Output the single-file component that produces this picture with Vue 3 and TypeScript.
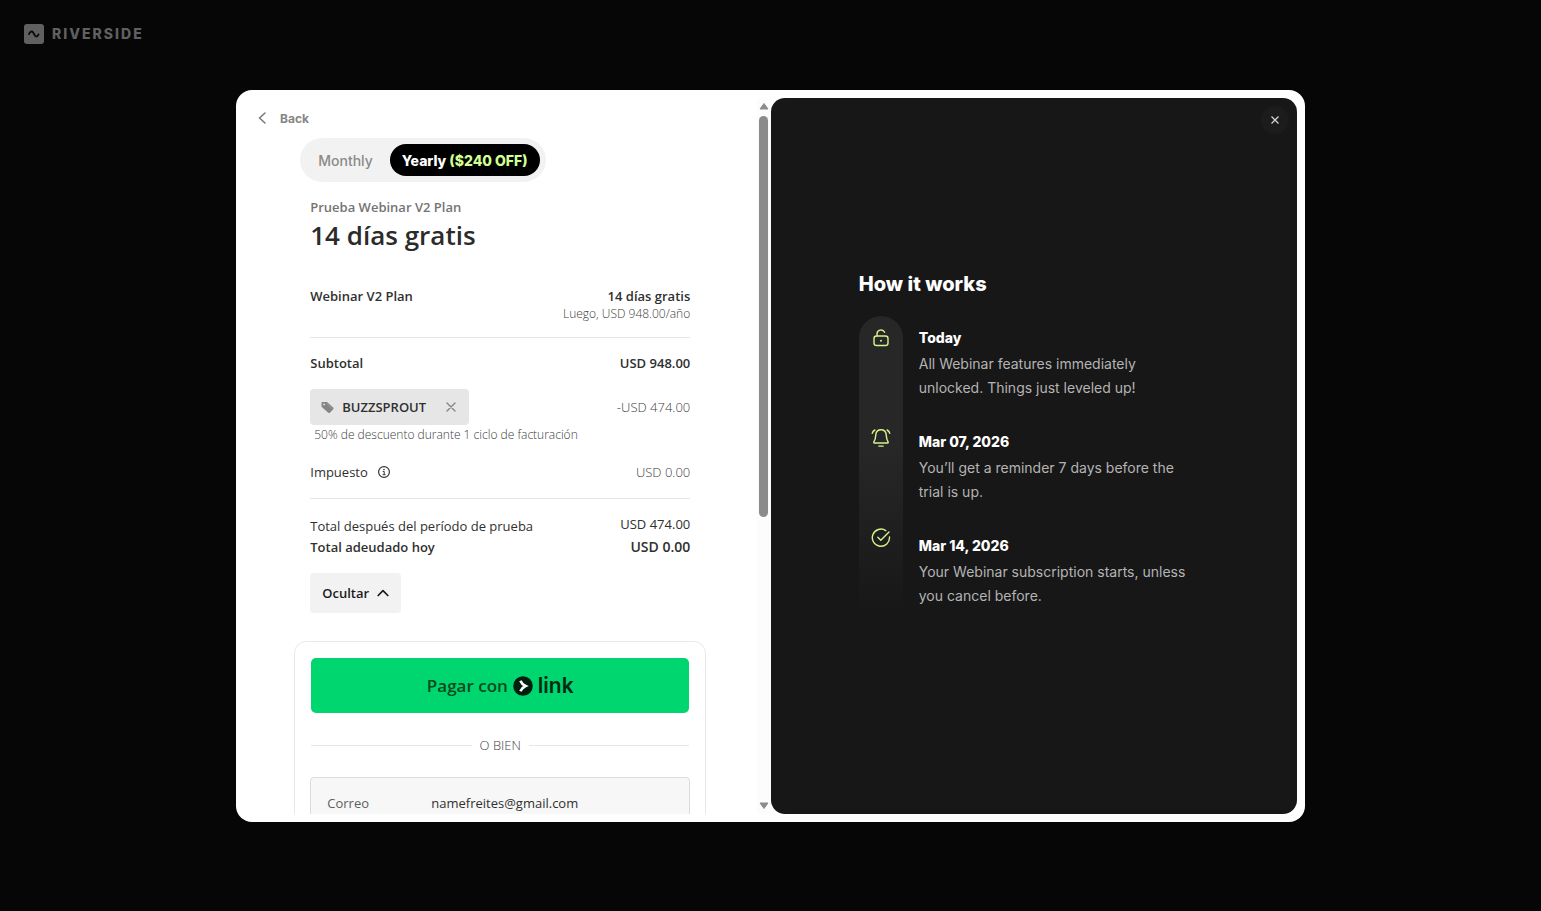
<script setup lang="ts">
import { ref } from 'vue'

type Billing = 'monthly' | 'yearly'

interface Step {
  title: string
  text: string
}

const billing = ref<Billing>('yearly')
const email = ref('namefreites@gmail.com')

const steps: Step[] = [
  { title: 'Today', text: 'All Webinar features immediately unlocked. Things just leveled up!' },
  { title: 'Mar 07, 2026', text: 'You’ll get a reminder 7 days before the trial is up.' },
  { title: 'Mar 14, 2026', text: 'Your Webinar subscription starts, unless you cancel before.' },
]
</script>

<template>
  <div class="page">
    <header class="brand">
      <svg class="brand-mark" viewBox="0 0 20 20" aria-hidden="true">
        <rect width="20" height="20" rx="3" fill="#606060" />
        <path d="M5 10.200c.7-2.700 3-3.500 4.200-1.700l1.700 3c1.100 1.700 2.900 1.200 3.700-1.200" fill="none" stroke="#0a0a0a" stroke-width="1.800" stroke-linecap="round" />
      </svg>
      <span class="brand-name">RIVERSIDE</span>
    </header>

    <main class="stage">
      <div class="modal" role="dialog" aria-label="Checkout">
        <section class="checkout">
          <div class="scroll-body">
            <button class="back" type="button">
              <svg width="8" height="12" viewBox="0 0 8 12" aria-hidden="true">
                <path d="M7 1 1.500 6 7 11" fill="none" stroke="#777" stroke-width="1.500" stroke-linecap="round" stroke-linejoin="round" />
              </svg>
              Back
            </button>

            <div class="column">
              <div class="toggle" role="group" aria-label="Billing period">
                <button type="button" :class="{ active: billing === 'monthly' }" :aria-pressed="billing === 'monthly'" @click="billing = 'monthly'">Monthly</button>
                <button type="button" :class="{ active: billing === 'yearly' }" :aria-pressed="billing === 'yearly'" @click="billing = 'yearly'">Yearly <span class="off">($240 OFF)</span></button>
              </div>

              <div class="summary">
                <p class="product">Prueba Webinar V2 Plan</p>
                <h1>14 días gratis</h1>

                <div class="row item">
                  <span class="strong">Webinar V2 Plan</span>
                  <span class="amount"><span class="strong">14 días gratis</span><span class="small">Luego, USD 948.00/año</span></span>
                </div>

                <div class="row subtotal">
                  <span class="strong">Subtotal</span>
                  <span class="strong">USD 948.00</span>
                </div>

                <div class="row coupon">
                  <span class="chip">
                    <svg class="tag" width="13" height="13" viewBox="0 0 13 13" aria-hidden="true">
                      <path d="M.5 2C.5 1.300.9.9 1.600.9h3.600c.6 0 1 .1 1.400.5l5.300 4.900c.8.800.8 1.500.1 2.200L9.100 11.500c-.7.700-1.400.7-2.100 0L1.100 6.300C.7 5.900.5 5.500.5 4.900z" fill="#858585" />
                      <circle cx="3.100" cy="3.400" r=".9" fill="#e6e6e6" />
                      <path d="m6 2.700 4.600 4.300" stroke="#a6a6a6" stroke-width=".7" />
                    </svg>
                    BUZZSPROUT
                    <button type="button" aria-label="Quitar BUZZSPROUT">
                      <svg width="10" height="10" viewBox="0 0 10 10" aria-hidden="true"><path d="m1 1 8 8M9 1 1 9" stroke="#858585" stroke-width="1.400" stroke-linecap="round" /></svg>
                    </button>
                  </span>
                  <span class="muted">-USD 474.00</span>
                </div>
                <p class="small note">50% de descuento durante 1 ciclo de facturación</p>

                <div class="row tax">
                  <span class="tax-label">Impuesto
                    <svg width="12" height="12" viewBox="0 0 12 12" aria-hidden="true">
                      <circle cx="6" cy="6" r="5.400" fill="none" stroke="#333" stroke-width="1.200" />
                      <path d="M4.700 5.400H6.200V8.600M4.600 8.700H7.600" fill="none" stroke="#333" stroke-width="1" />
                      <circle cx="6" cy="3.500" r=".8" fill="#333" />
                    </svg>
                  </span>
                  <span class="muted">USD 0.00</span>
                </div>

                <div class="row after">
                  <span>Total después del período de prueba</span>
                  <span>USD 474.00</span>
                </div>
                <div class="row due">
                  <span>Total adeudado hoy</span>
                  <span class="due-amount">USD 0.00</span>
                </div>

                <button class="hide" type="button">
                  Ocultar
                  <svg width="12" height="8" viewBox="0 0 12 8" aria-hidden="true"><path d="m1.200 6.500 4.800-4.800 4.800 4.800" fill="none" stroke="#1a1a1a" stroke-width="1.700" stroke-linecap="round" stroke-linejoin="round" /></svg>
                </button>
              </div>

              <form class="card" @submit.prevent>
                <button class="pay" type="button">
                  Pagar con
                  <svg width="20" height="20" viewBox="0 0 20 20" aria-hidden="true">
                    <circle cx="10" cy="10" r="9.800" fill="#011e0f" />
                    <path d="M7.400 4.700c.9 2.300 2.600 4.100 5.200 5.300-2.600 1.200-4.300 3-5.200 5.300" fill="none" stroke="#fff" stroke-width="2.600" stroke-linejoin="miter" />
                  </svg>
                  <span class="link-word">link</span>
                </button>
                <div class="divider"><span>O BIEN</span></div>
                <div class="field">
                  <label for="email">Correo</label>
                  <input id="email" v-model="email" type="email" readonly />
                </div>
              </form>
            </div>
          </div>

          <div class="scrollbar" aria-hidden="true">
            <svg width="10" height="8" viewBox="0 0 10 8"><path d="M5 1.500 9 7H1z" fill="#8b8b8b" stroke="#8b8b8b" stroke-linejoin="round" /></svg>
            <div class="track"><div class="thumb"></div></div>
            <svg width="10" height="8" viewBox="0 0 10 8"><path d="M5 6.500 9 1H1z" fill="#8b8b8b" stroke="#8b8b8b" stroke-linejoin="round" /></svg>
          </div>
        </section>

        <aside class="info">
          <button class="close" type="button" aria-label="Close">
            <svg width="8" height="8" viewBox="0 0 8 8" aria-hidden="true"><path d="m.5.5 7 7M7.500.5l-7 7" stroke="#d8d8d8" stroke-width="1.200" /></svg>
          </button>
          <div class="how">
            <h2>How it works</h2>
            <div class="timeline">
              <div class="rail" aria-hidden="true">
                <svg width="20" height="20" viewBox="0 0 20 20">
                  <rect x="3" y="8" width="14" height="9.500" rx="2.600" />
                  <path d="M6 8V6a4 4 0 0 1 7.600-1.700" />
                  <circle class="dot" cx="10" cy="12.800" r="1" />
                </svg>
                <svg width="20" height="20" viewBox="0 0 20 20">
                  <path d="M10 1.700c-3.300 0-5 2.200-5.200 5.200-.2 3.400-.7 5.200-1.900 7-.4.600-.1 1.100.6 1.100h13c.7 0 1-.5.600-1.100-1.200-1.800-1.700-3.600-1.900-7-.2-3-1.900-5.200-5.200-5.200z" />
                  <path d="M7.800 18.100h4.400M3.900 2C2.500 2.700 1.600 3.700 1.200 5.300M16.100 2c1.400.7 2.300 1.700 2.700 3.300" />
                </svg>
                <svg width="20" height="20" viewBox="0 0 20 20">
                  <path d="M14.800 2.600A8.600 8.600 0 1 0 18.500 9" />
                  <path d="m6.800 9.300 3 2.900 8.200-8.300" />
                </svg>
              </div>
              <ol class="steps">
                <li v-for="step in steps" :key="step.title">
                  <h3>{{ step.title }}</h3>
                  <p>{{ step.text }}</p>
                </li>
              </ol>
            </div>
          </div>
        </aside>
      </div>
    </main>
  </div>
</template>

<style>
body {
  margin: 0;
  background: #060606;
}
</style>

<style scoped>
* {
  box-sizing: border-box;
}

h1, h2, h3, p, ol {
  margin: 0;
  padding: 0;
}

button {
  border: 0;
  padding: 0;
  background: none;
  font: inherit;
  color: inherit;
  cursor: pointer;
}

svg {
  display: block;
  flex: none;
}

.page {
  display: flex;
  flex-direction: column;
  height: 100vh;
  background: #060606;
  font-family: Inter, "Liberation Sans", sans-serif;
}

.brand {
  display: flex;
  align-items: center;
  gap: 8px;
  padding: 24px;
}

.brand-mark {
  width: 20px;
  height: 20px;
}

.brand-name {
  font-size: 14px;
  font-weight: 800;
  line-height: 20px;
  letter-spacing: 2px;
  color: #606060;
}

.stage {
  flex: 1;
  min-height: 0;
  display: flex;
  padding: 22px 236px 89px;
}

.modal {
  flex: 1;
  min-width: 0;
  display: grid;
  grid-template-columns: 1fr 1fr;
  grid-template-rows: minmax(0, 1fr);
  padding: 8px;
  border-radius: 16px;
  background: #fff;
}

.checkout {
  display: flex;
  min-width: 0;
}

.scroll-body {
  flex: 1;
  min-width: 0;
  overflow: hidden;
  display: flex;
  flex-direction: column;
}

.back {
  display: flex;
  align-items: center;
  align-self: flex-start;
  gap: 14px;
  height: 40px;
  flex: none;
  padding-left: 14px;
  font-size: 12px;
  font-weight: 700;
  color: #868686;
}

.column {
  width: 412px;
  max-width: 100%;
  margin: 0 auto;
}

.toggle {
  display: flex;
  gap: 5px;
  width: fit-content;
  margin-left: 6px;
  padding: 6px;
  border-radius: 22px;
  background: #f2f2f2;
}

.toggle button {
  height: 32px;
  padding: 0 12px;
  border-radius: 16px;
  font-size: 14px;
  font-weight: 500;
  color: #8a8a8a;
}

.toggle .active {
  background: #000;
  color: #fff;
  font-weight: 800;
}

.off {
  color: #d2ff92;
}

.summary {
  padding: 15px 16px 28px;
  font-family: "Open Sans", "Noto Sans", sans-serif;
  font-size: 13px;
  line-height: 18px;
  color: #303030;
}

.product {
  line-height: 20px;
  font-weight: 600;
  color: #747474;
}

h1 {
  font-size: 26px;
  line-height: 36px;
  font-weight: 600;
  color: #2b2b2b;
}

.row {
  display: flex;
  justify-content: space-between;
}

.strong {
  font-weight: 600;
}

.small {
  font-size: 12px;
  font-weight: 300;
  color: #404040;
}

.muted {
  font-weight: 300;
  color: #404040;
}

.amount {
  display: flex;
  flex-direction: column;
  text-align: right;
}

.item {
  margin-top: 34px;
  padding-bottom: 14px;
  border-bottom: 1px solid #e6e6e6;
}

.subtotal {
  margin-top: 16px;
}

.coupon {
  margin-top: 17px;
  align-items: center;
}

.chip {
  display: flex;
  align-items: center;
  gap: 8px;
  height: 36px;
  padding: 0 13px 0 11px;
  border-radius: 4px;
  background: #e6e6e6;
  font-weight: 600;
}

.chip button {
  margin-left: 12px;
}

.note {
  padding-left: 4px;
  line-height: 20px;
}

.tax {
  margin-top: 18px;
  padding-bottom: 17px;
  border-bottom: 1px solid #e6e6e6;
}

.tax-label {
  display: flex;
  align-items: center;
  gap: 10px;
}

.after {
  margin-top: 16px;
  height: 20px;
}

.after > :first-child {
  align-self: flex-end;
}

.due {
  margin-top: 3px;
  font-weight: 600;
}

.due-amount {
  font-size: 14px;
}

.hide {
  display: flex;
  align-items: center;
  gap: 8px;
  height: 40px;
  margin-top: 17px;
  padding: 0 12px;
  border-radius: 4px;
  background: #f2f2f2;
  font-weight: 600;
  color: #1a1a1a;
}

.card {
  height: 400px;
  padding: 16px;
  border: 1px solid #e8e8e8;
  border-radius: 12px;
  font-family: "Open Sans", "Noto Sans", sans-serif;
  font-size: 13px;
  line-height: 20px;
}

.pay {
  display: flex;
  align-items: center;
  justify-content: center;
  gap: 5px;
  width: 100%;
  height: 55px;
  border-radius: 5px;
  background: #00d66f;
  font-size: 17px;
  font-weight: 600;
  color: #0b4a1c;
}

.link-word {
  font-family: Inter, sans-serif;
  font-size: 21px;
  font-weight: 600;
  color: #022a13;
}

.divider {
  display: flex;
  align-items: center;
  gap: 8px;
  margin: 22px 0;
  font-weight: 300;
  color: #404040;
}

.divider::before,
.divider::after {
  content: "";
  flex: 1;
  height: 1px;
  background: #e6e6e6;
}

.field {
  display: flex;
  align-items: center;
  height: 52px;
  margin: 0 -1px;
  padding: 0 16px;
  border: 1px solid #dcdcdc;
  border-radius: 4px 4px 0 0;
  background: #f7f7f7;
}

.field label {
  flex: none;
  width: 104px;
  color: #606060;
}

.field input {
  flex: 1;
  min-width: 0;
  border: 0;
  padding: 0;
  outline: 0;
  background: none;
  font: inherit;
  color: #303030;
}

.scrollbar {
  display: flex;
  flex-direction: column;
  align-items: center;
  justify-content: space-between;
  width: 14px;
  padding: 4px 0;
  background: #fcfcfc;
}

.track {
  flex: 1;
  width: 9px;
  padding: 6px 0;
}

.thumb {
  height: 59%;
  border-radius: 5px;
  background: #8b8b8b;
}

.info {
  position: relative;
  display: flex;
  align-items: center;
  justify-content: center;
  min-width: 0;
  border-radius: 14px;
  background: #171717;
}

.close {
  position: absolute;
  top: 8px;
  right: 8px;
  display: grid;
  place-items: center;
  width: 28px;
  height: 28px;
  border-radius: 50%;
  background: #1c1c1c;
}

.how {
  width: 350px;
  max-width: 100%;
}

h2 {
  font-size: 20px;
  font-weight: 800;
  line-height: 28px;
  color: #fff;
}

.timeline {
  display: flex;
  gap: 16px;
  margin-top: 18px;
}

.rail {
  display: flex;
  flex-direction: column;
  align-items: center;
  gap: 80px;
  flex: none;
  width: 44px;
  min-height: 326px;
  padding-top: 12px;
  border-radius: 22px;
  background: linear-gradient(#272727 40%, #171717 92%);
}

.rail svg {
  fill: none;
  stroke: #d6f28a;
  stroke-width: 1.4;
  stroke-linecap: round;
  stroke-linejoin: round;
}

.rail .dot {
  fill: #d6f28a;
  stroke: none;
}

.steps {
  display: flex;
  flex-direction: column;
  gap: 30px;
  flex: 1;
  max-width: 280px;
  padding-top: 10px;
  list-style: none;
}

h3 {
  font-size: 14px;
  font-weight: 800;
  line-height: 24px;
  color: #fff;
}

.steps p {
  margin-top: 2px;
  font-size: 14px;
  line-height: 24px;
  color: #b4b4b4;
}
</style>
